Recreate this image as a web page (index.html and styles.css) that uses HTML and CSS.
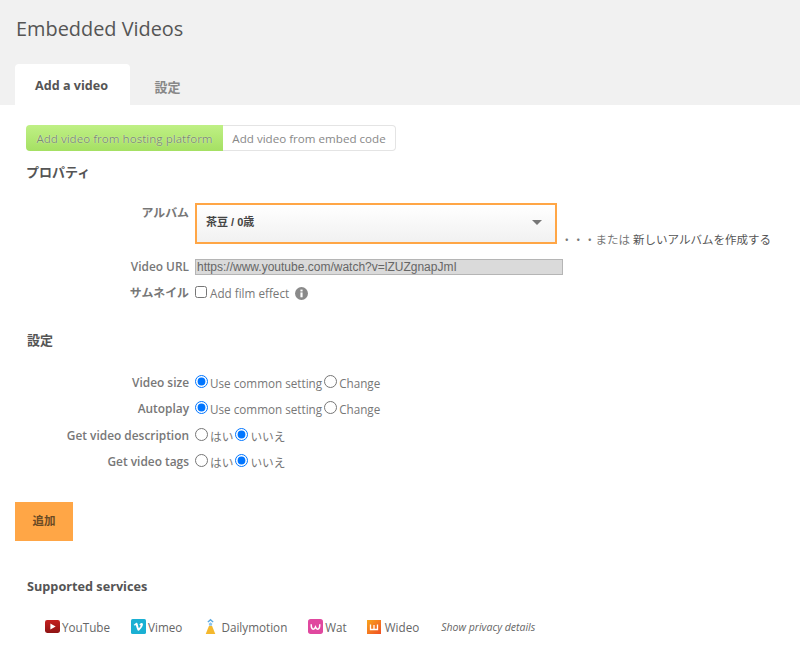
FILE: index.html
```html
<!DOCTYPE html>
<html lang="ja">
<head>
<meta charset="utf-8">
<title>Embedded Videos</title>
<link rel="stylesheet" href="styles.css">
</head>
<body>
<header class="head">
  <h1 class="title">Embedded Videos</h1>
  <nav class="tabs">
    <a class="tab tab-on">Add a video</a>
    <a class="tab">設定</a>
  </nav>
</header>
<main class="main">
  <div class="toggle">
    <span class="tog tog-on">Add video from hosting platform</span>
    <span class="tog">Add video from embed code</span>
  </div>
  <h3 class="sec sec-prop">プロパティ</h3>
  <div class="form form-prop">
    <div class="row row-album">
      <div class="lbl lbl-album">アルバム</div>
      <div class="select"><span class="select-text">茶豆 / 0歳</span><i class="caret"></i></div>
      <div class="or">・・・または <span class="or-link">新しいアルバムを作成する</span></div>
    </div>
    <div class="row row-url">
      <div class="lbl">Video URL</div>
      <input class="url" type="text" disabled value="https://www.youtube.com/watch?v=lZUZgnapJmI">
    </div>
    <div class="row row-thumb">
      <div class="lbl">サムネイル</div>
      <label class="opt"><input class="check" type="checkbox">Add film effect</label>
      <svg class="info" viewBox="0 0 12 12" width="13" height="13"><circle cx="6" cy="6" r="6" fill="#8a8a8a"/><rect x="5" y="5" width="2" height="4.500" fill="#fff"/><rect x="5" y="2.400" width="2" height="1.700" fill="#fff"/></svg>
    </div>
  </div>
  <h3 class="sec sec-set">設定</h3>
  <div class="form form-set">
    <div class="row row-r">
      <div class="lbl">Video size</div>
      <label class="opt"><input class="radio" type="radio" name="a" checked>Use common setting</label>
      <label class="opt"><input class="radio" type="radio" name="a">Change</label>
    </div>
    <div class="row row-r">
      <div class="lbl">Autoplay</div>
      <label class="opt"><input class="radio" type="radio" name="b" checked>Use common setting</label>
      <label class="opt"><input class="radio" type="radio" name="b">Change</label>
    </div>
    <div class="row row-r">
      <div class="lbl">Get video description</div>
      <label class="opt"><input class="radio" type="radio" name="c">はい</label>
      <label class="opt"><input class="radio" type="radio" name="c" checked>いいえ</label>
    </div>
    <div class="row row-r">
      <div class="lbl">Get video tags</div>
      <label class="opt"><input class="radio" type="radio" name="d">はい</label>
      <label class="opt"><input class="radio" type="radio" name="d" checked>いいえ</label>
    </div>
  </div>
  <button class="add" type="button">追加</button>
  <h3 class="sec sec-sup">Supported services</h3>
  <div class="services">
    <span class="svc svc-yt"><svg viewBox="0 0 14 14" width="15" height="15"><defs><linearGradient id="yg" x1="0" y1="0" x2="0" y2="1"><stop offset="0" stop-color="#c4201f"/><stop offset="1" stop-color="#8f1414"/></linearGradient></defs><rect x="0" y="1" width="14" height="12" rx="2" fill="url(#yg)"/><path d="M5 4.200v5.600L10 7z" fill="#fff"/></svg>YouTube</span>
    <span class="svc svc-vm"><svg viewBox="0 0 14 14" width="15" height="15"><rect width="14" height="14" rx="1.500" fill="#1ab0d3"/><path d="M2.600 5.200 3.400 6.200c.6-.5 1-.6 1.200-.2.4 1.200.8 2.800 1.300 4 .4 1 1 1.200 1.700.7 1.400-1 3-3.300 3.500-5 .3-1.300-.3-2-1.300-1.900-1 .1-1.700.8-2 2.100.7-.4 1.300-.2 1 .7-.2.7-1 1.900-1.400 2-.4-.2-.8-2.700-1.200-4-.3-1-.9-1.200-1.600-.8-.7.4-1.500 1.200-2.500 2.100z" fill="#fff"/></svg>Vimeo</span>
    <span class="svc svc-dm"><svg viewBox="0 0 12 16" width="13" height="17"><path d="M3 3.500 6 .8l3 2.700-1 .8-2-1.700-2 1.700z" fill="#5aa8e0"/><path d="M4.300 5.300 6 3.900l1.700 1.400-.5 2H4.800z" fill="#8cc4ea"/><path d="M4.500 7.500h3L10.500 15H1.500z" fill="#f4b82e"/></svg>Dailymotion</span>
    <span class="svc svc-wat"><svg viewBox="0 0 14 14" width="15" height="15"><rect width="14" height="14" rx="2.500" fill="#e0489f"/><path d="M3 5c0 3 .6 4.500 1.900 4.500C6 9.500 6.600 8.500 7 7.500c.4 1 1 2 2.100 2C10.400 9.500 11 8 11 5" fill="none" stroke="#fff" stroke-width="1.400"/></svg>Wat</span>
    <span class="svc svc-wd"><svg viewBox="0 0 14 14" width="14" height="14"><defs><linearGradient id="wg" x1="0" y1="0" x2="1" y2="1"><stop offset="0" stop-color="#f9a51d"/><stop offset="1" stop-color="#f04e23"/></linearGradient></defs><rect width="14" height="14" fill="url(#wg)"/><path d="M3.500 4.500v5h7v-5M7 5v4.500" fill="none" stroke="#fff" stroke-width="1.300"/></svg>Wideo</span>
    <a class="privacy">Show privacy details</a>
  </div>
</main>
</body>
</html>
```
FILE: styles.css
```css
* { box-sizing: border-box; }
html, body { margin: 0; padding: 0; }
body {
  width: 800px;
  height: 646px;
  overflow: hidden;
  background: #fff;
  color: #777;
  font-family: "Open Sans", "Noto Sans CJK JP", sans-serif;
  font-size: 11.700px;
  line-height: 18px;
}
.head {
  height: 105px;
  background: #f1f1f1;
  padding: 15px 0 0 16px;
}
.title {
  margin: 0;
  height: 27px;
  font-size: 19.900px;
  font-weight: 400;
  line-height: 27px;
  color: #555;
}
.tabs {
  display: flex;
  margin: 22px 0 0 -1px;
  height: 41px;
}
.tab {
  width: 115px;
  padding-top: 11px;
  text-align: center;
  font-size: 13px;
  font-weight: 600;
  color: #888;
  line-height: 20px;
}
.tab + .tab { width: 75px; padding-top: 13px; }
.tab-on {
  padding: 12px 2px 0 0;
  background: #fff;
  color: #555;
  font-weight: 700;
  font-size: 12.600px;
  border-radius: 4px 4px 0 0;
}
.main { padding: 20px 0 0 15px; }
.toggle {
  display: flex;
  width: 370px;
  height: 26px;
  margin-left: 11px;
  font-size: 11.600px;
}
.tog {
  flex: 1;
  border: 1px solid #e4e4e4;
  border-left: 0;
  border-radius: 0 4px 4px 0;
  color: #888;
  line-height: 26px;
  text-align: center;
  white-space: nowrap;
}
.tog-on {
  flex: 0 0 197px;
  border: 0;
  border-radius: 4px 0 0 4px;
  background: linear-gradient(#bff085, #a5e063);
  color: #7a8f68;
  line-height: 28px;
  text-shadow: 0 0 1px #fff;
}
.sec {
  margin: 0;
  font-size: 13px;
  font-weight: 700;
  color: #555;
  line-height: 18px;
}
.sec-prop { margin: 12px 0 0 11px; }
.sec-set { margin: 29px 0 0 12px; }
.sec-sup { margin: 36px 0 0 12px; font-size: 12.700px; line-height: 19px; }
.form-prop { margin-top: 22px; }
.form-set { margin-top: 25px; }
.row { display: flex; align-items: center; }
.lbl {
  flex: 0 0 174px;
  margin: -2px 6px 0 0;
  text-align: right;
  font-weight: 600;
  font-size: 11.900px;
  color: #777;
  white-space: nowrap;
}
.row-album { align-items: flex-start; height: 41px; }
.lbl-album { padding-top: 2px; }
.select {
  flex: 0 0 362px;
  height: 41px;
  border: 2px solid #ffa646;
  background: linear-gradient(#fff, #f1f1f1);
  padding: 0 13px 0 9px;
  display: flex;
  align-items: center;
  justify-content: space-between;
  font-family: "Liberation Sans", "Noto Sans CJK JP", sans-serif;
  font-size: 11px;
  font-weight: 700;
  color: #444;
}
.select-text { margin-top: -3px; }
.caret {
  width: 0;
  height: 0;
  margin-top: -2px;
  border-left: 5px solid transparent;
  border-right: 5px solid transparent;
  border-top: 5px solid #777;
}
.or {
  margin: 28px 0 0 4px;
  font-size: 11.500px;
  white-space: nowrap;
}
.or-link { color: #555; }
.row-url { margin-top: 15px; height: 16px; }
.url {
  width: 368px;
  height: 16px;
  padding: 0 0 0 1px;
  border: 1px solid #b5b5b5;
  border-radius: 0;
  background: #dadada;
  color: #666;
  font-family: "Liberation Sans", sans-serif;
  font-size: 12px;
}
.row-thumb { margin-top: 9px; height: 18px; }
.opt { display: flex; align-items: center; white-space: nowrap; }
.check { margin: -2px 3px 0 0; width: 12px; height: 12px; }
.radio { margin: -3px 2px 0 0; width: 13px; height: 13px; accent-color: #0075ff; }
.info { margin-left: 6px; }
.row-r { height: 18px; margin-bottom: 8.300px; }
.row-r .opt + .opt { margin-left: 2px; }
.add {
  display: block;
  width: 58px;
  height: 39px;
  margin-top: 31px;
  padding: 0 0 2px;
  border: 0;
  background: #ffa646;
  color: #6b4a24;
  font-family: "Open Sans", "Noto Sans CJK JP", sans-serif;
  font-size: 11.500px;
  font-weight: 700;
}
.services {
  display: flex;
  align-items: center;
  height: 18px;
  margin: 22px 0 0 30px;
  color: #666;
}
.svc { display: flex; align-items: center; gap: 3px; white-space: nowrap; }
.svc-yt { gap: 2px; }
.svc-vm { margin-left: 21px; gap: 2px; }
.svc-dm { margin-left: 22px; gap: 4px; }
.svc-wat { margin-left: 21px; gap: 2px; }
.svc-wd { margin-left: 20px; gap: 4px; }
.privacy {
  margin-left: 22px;
  font-size: 10.500px;
  font-style: italic;
  white-space: nowrap;
}
```
